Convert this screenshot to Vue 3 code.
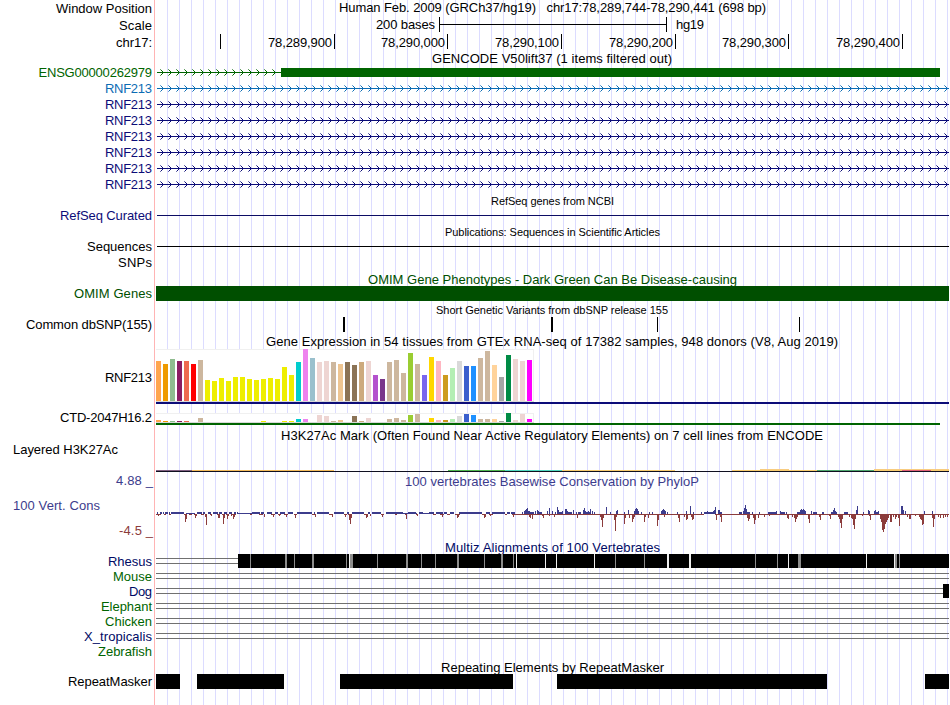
<script setup>
const range = (n) => Array.from({ length: n }, (_, i) => i)
const GREEN = '#006400', NAVY = '#0c0c78', SKY = '#0c6cb4', CONS = '#3c3c8c', RUST = '#8c3c3c', OMIM = '#004f00', ALIGN = '#000a64'

// text entries: [text, left, right, baseline]
const source = [
  { h: 17, label: ['Window Position', 56, 152, 13], texts: [['Human Feb. 2009 (GRCh37/hg19)\u00a0\u00a0\u00a0chr17:78,289,744-78,290,441 (698 bp)', 339, 766, 12]] },
  { h: 17, label: ['Scale', 119, 152, 30], texts: [['200 bases', 376, 435, 29], ['hg19', 676, 704, 29]],
    rects: [[439, 24, 228, 1, '#000'], [439, 17, 1, 15, '#000'], [666, 17, 1, 15, '#000']] },
  { h: 17, label: ['chr17:', 116, 152, 47],
    texts: ['78,289,900', '78,290,000', '78,290,100', '78,290,200', '78,290,300', '78,290,400'].map((t, i) => [t, [268, 381, 495, 609, 722, 836][i], [332, 445, 559, 673, 786, 900][i], 47]),
    rects: [220, 334, 447, 561, 675, 788, 902].map((x) => [x, 34, 1, 15, '#000']) },
  { h: 13, texts: [['GENCODE V50lift37 (1 items filtered out)', 432, 672, 63]] },
  { h: 16, label: ['ENSG00000262979', 38.5, 152, 77], color: GREEN, arrows: 15, rects: [[157, 72, 124, 1, GREEN], [281, 68, 659, 9, GREEN]] },
  ...range(7).map((i) => ({ h: 16, label: ['RNF213', 105, 152, 93 + i * 16], color: i ? NAVY : SKY, arrows: 99, rects: [[157, 88 + i * 16, 792, 1, i ? NAVY : SKY]] })),
  { h: 16, small: true, texts: [['RefSeq genes from NCBI', 491, 614, 205]] },
  { h: 15, label: ['RefSeq Curated', 60, 152, 220], color: NAVY, rects: [[157, 215, 792, 1, '#0c0c64']] },
  { h: 16, small: true, texts: [['Publications: Sequences in Scientific Articles', 445, 660, 236]] },
  { h: 15, label: ['Sequences', 87, 152, 251], rects: [[157, 246, 792, 1, '#000']] },
  { h: 16, label: ['SNPs', 118, 152, 267] },
  { h: 16, titleColor: OMIM, texts: [['OMIM Gene Phenotypes - Dark Green Can Be Disease-causing', 368, 737, 284]] },
  { h: 15, label: ['OMIM Genes', 74, 152, 298], color: OMIM, rects: [[156, 286, 793, 15, OMIM]] },
  { h: 16, small: true, texts: [['Short Genetic Variants from dbSNP release 155', 436, 668, 314]] },
  { h: 15, label: ['Common dbSNP(155)', 26, 152, 329], rects: [[343, 317, 2, 15, '#000'], [551, 317, 2, 15, '#000'], [657, 317, 1, 15, '#000'], [799, 317, 1, 15, '#000']] },
  { h: 17, texts: [['Gene Expression in 54 tissues from GTEx RNA-seq of 17382 samples, 948 donors (V8, Aug 2019)', 266, 838, 346]] },
  { h: 60, kind: 'gtexMain', label: ['RNF213', 105, 152, 382] },
  { h: 19, kind: 'gtexSmall', label: ['CTD-2047H16.2', 60, 152, 422] },
  { h: 14, texts: [['H3K27Ac Mark (Often Found Near Active Regulatory Elements) on 7 cell lines from ENCODE', 281, 823, 440]] },
  { h: 31, kind: 'h3k', label: ['Layered H3K27Ac', 13, 118, 454] },
  { h: 16, label: ['4.88 _', 116, 153, 485], color: CONS, titleColor: CONS, texts: [['100 vertebrates Basewise Conservation by PhyloP', 405, 699, 486]] },
  { h: 35, kind: 'phylop', label: ['100 Vert. Cons', 13, 100, 510], color: CONS },
  { h: 17, label: ['-4.5 _', 119, 153, 535], color: RUST },
  { h: 14, titleColor: ALIGN, texts: [['Multiz Alignments of 100 Vertebrates', 445, 660, 552]] },
  ...[['Rhesus', 108], ['Mouse', 113], ['Dog', 129], ['Elephant', 101], ['Chicken', 105], ['X_tropicalis', 84], ['Zebrafish', 98]].map(([t, l], i) => ({
    h: 15, label: [t, l, 152, 566 + i * 15], color: [0, 2, 5].includes(i) ? ALIGN : '#006400', kind: i === 0 ? 'rhesus' : '',
    rects: i === 6 ? [] : [[156, 558 + i * 15, 793, 1, '#707070'], [156, 563 + i * 15, 793, 1, '#707070'], ...(i === 2 ? [[943, 584, 6, 14, '#000']] : [])]
  })),
  { h: 15, texts: [['Repeating Elements by RepeatMasker', 441, 664, 672]] },
  { h: 31, label: ['RepeatMasker', 68, 152, 686], rects: [[156, 180], [197, 284], [340, 513], [557, 827], [925, 949]].map(([a, b]) => [a, 674, b - a, 15, '#000']) }
]

const T = '#cdb79e', Y = '#eeee00', P = '#eed5d2'
const tissue = ['#ffa54f', '#ee9a00', '#8fbc8f', '#8b1c62', '#ee6a50', '#ff0000', T, ...Array(13).fill(Y), '#00cdcd', '#ee82ee', '#9ac0cd', P, P, T, '#eec591', '#8b7355', '#8b7355', '#cdaa7d', P, '#b452cd', '#7a378b', T, T, T, '#9acd32', T, '#7a67ee', '#ffd700', '#ffb6c1', '#cd9b1d', '#b4eeb4', '#d9d9d9', '#3a5fcd', '#1e90ff', T, T, '#ffd39b', '#a6a6a6', '#008b45', P, P, '#ff00ff']
const mainH = [40, 37, 42, 40, 40, 37, 41, 21, 20, 23, 20, 24, 24, 22, 21, 22, 23, 22, 34, 26, 39, 52, 43, 39, 40, 39, 37, 39, 36, 39, 40, 26, 22, 39, 41, 28, 48, 37, 26, 44, 40, 26, 33, 40, 35, 35, 43, 50, 36, 24, 46, 42, 40, 41]
const smallH = [2, 1, 1, 1, 1, 0, 4, 0, 0, 0, 0, 0, 0, 0, 0, 1, 0, 0, 1, 1, 3, 3, 0, 7, 6, 1, 2, 0, 6, 1, 4, 0, 0, 3, 4, 2, 7, 8, 0, 4, 2, 2, 3, 6, 8, 7, 3, 3, 3, 1, 9, 2, 8, 3]
const bars = (hs, base) => hs.map((h, i) => [156 + i * 7, base - h, 5, h, tissue[i]])

// conservation wiggle: runs of low score, plus individual peaks as [x, height]
const blueRuns = [[157, 1], [160, 2], [163, 1], [165, 3], [169, 1], [171, 13], [197, 5], [203, 2], [208, 3], [213, 5], [219, 3], [224, 3], [229, 3], [234, 2], [237, 1], [252, 8], [261, 3], [267, 5], [275, 3], [280, 5], [288, 5], [297, 15], [314, 1], [317, 12], [334, 10], [347, 2], [352, 12], [368, 2], [372, 8], [378, 3], [386, 17], [408, 8], [419, 4], [429, 5], [436, 7], [444, 3], [450, 4], [459, 23], [486, 4], [492, 13], [507, 3], [511, 4]]
const thinBlue = [[186, 9], [238, 15], [403, 14], [422, 7]]
const up = [[522, 2], [524, 3], [525, 4], [526, 5], [527, 6], [528, 3], [529, 3], [535, 3], [537, 4], [538, 3], [547, 3], [549, 6], [552, 3], [555, 2], [557, 7], [558, 4], [562, 3], [565, 5], [566, 5], [567, 3], [571, 2], [573, 4], [576, 2], [583, 4], [584, 6], [585, 3], [588, 3], [590, 5], [592, 3], [606, 7], [610, 2], [616, 3], [617, 4], [624, 2], [628, 4], [634, 3], [635, 5], [636, 6], [637, 5], [638, 3], [641, 2], [649, 2], [652, 2], [661, 3], [662, 4], [663, 5], [664, 4], [665, 3], [667, 2], [677, 2], [686, 3], [690, 8], [693, 2], [701, 2], [707, 3], [713, 3], [714, 4], [715, 7], [718, 4], [719, 4], [739, 2], [743, 3], [744, 6], [745, 9], [746, 5], [752, 2], [759, 2], [776, 3], [780, 3], [784, 2], [786, 2], [800, 4], [801, 5], [802, 4], [803, 5], [804, 4], [805, 3], [811, 3], [814, 2], [816, 2], [823, 2], [833, 4], [834, 6], [835, 3], [845, 2], [846, 2], [856, 4], [857, 8], [863, 2], [868, 4], [869, 3], [874, 3], [875, 4], [878, 3], [901, 8], [902, 8], [903, 4], [905, 3], [924, 3], [932, 3]]
const upRuns = [[530, 4], [539, 3], [559, 3], [568, 4], [578, 3], [586, 5], [594, 1], [704, 10], [720, 2], [739, 3], [747, 3], [768, 9], [781, 4], [797, 9], [813, 4], [822, 2], [831, 6], [844, 4], [876, 2]]
const down = [[158, 2], [185, 8], [186, 5], [190, 1], [195, 4], [196, 2], [205, 3], [206, 11], [211, 2], [218, 4], [219, 4], [223, 10], [224, 4], [227, 5], [228, 2], [231, 2], [233, 5], [234, 3], [264, 3], [273, 3], [279, 2], [286, 3], [295, 4], [315, 3], [332, 3], [345, 3], [349, 6], [350, 10], [351, 4], [366, 4], [367, 3], [370, 2], [382, 3], [406, 5], [417, 2], [442, 3], [457, 4], [458, 3], [484, 4], [485, 3], [490, 2], [513, 3], [529, 3], [530, 4], [532, 5], [542, 2], [543, 4], [549, 2], [554, 3], [577, 4], [600, 3], [601, 6], [602, 13], [603, 4], [614, 6], [615, 17], [616, 3], [624, 10], [625, 4], [629, 4], [632, 8], [633, 5], [634, 3], [644, 8], [645, 3], [648, 4], [657, 12], [658, 6], [664, 3], [678, 4], [679, 8], [684, 3], [686, 6], [687, 5], [691, 3], [692, 6], [693, 5], [716, 6], [720, 3], [721, 8], [747, 4], [748, 7], [749, 5], [753, 4], [754, 10], [755, 6], [758, 4], [764, 3], [769, 2], [787, 4], [788, 5], [792, 3], [794, 4], [795, 8], [796, 5], [797, 3], [808, 5], [809, 9], [819, 3], [820, 6], [829, 2], [830, 5], [838, 3], [839, 5], [840, 9], [841, 14], [842, 5], [849, 3], [851, 4], [852, 5], [853, 11], [854, 15], [855, 5], [862, 2], [869, 2], [870, 6], [880, 5], [881, 8], [882, 16], [883, 18], [884, 15], [885, 10], [886, 8], [887, 6], [888, 4], [890, 8], [891, 8], [893, 3], [895, 5], [896, 3], [898, 4], [899, 12], [907, 3], [909, 5], [910, 5], [915, 2], [919, 3], [920, 5], [921, 6], [922, 11], [923, 10], [932, 4], [933, 13], [934, 5], [938, 3], [940, 4], [943, 4], [945, 3], [947, 3]]
const redBase = [[156, 5], [164, 2], [169, 2], [184, 3], [189, 3], [194, 3], [201, 3], [210, 2], [217, 3], [222, 2], [226, 3], [232, 4], [250, 2], [259, 4], [271, 4], [278, 3], [284, 4], [294, 3], [312, 4], [329, 4], [344, 3], [348, 4], [364, 4], [381, 3], [395, 2], [405, 2], [416, 2], [433, 3], [440, 4], [447, 3], [455, 5], [482, 4], [489, 4], [505, 2], [512, 4], [516, 188], [715, 35], [750, 199]]

const special = {
  gtexMain: [[156, 349, 378, 53, '#f0f0f0'], [156, 350, 377, 51, '#fff'], [156, 401, 378, 1, '#d8d8d8'], ...bars(mainH, 401), [156, 402, 793, 2, NAVY]],
  gtexSmall: [[156, 413, 378, 10, '#f0f0f0'], [156, 414, 377, 8, '#fff'], [156, 422, 378, 1, '#d8d8d8'], ...bars(smallH, 422), [156, 423, 784, 2, GREEN]],
  h3k: [[156, 471, 793, 1, '#101020'], [156, 470, 36, 1, '#806080'], [192, 470, 142, 1, '#f4bc5c'], [448, 470, 57, 1, '#50b850'], [505, 470, 57, 1, '#50d8c0'], [562, 470, 113, 1, '#f8cc70'], [732, 470, 85, 1, '#f8cc70'], [760, 469, 29, 1, '#f8cc80'], [817, 470, 57, 1, '#50a870'], [874, 469, 75, 1, '#f8cc80'], [874, 470, 28, 1, '#f8cc70'], [902, 470, 29, 1, '#e06078'], [931, 470, 18, 1, '#f8cc70']],
  phylop: [
    ...thinBlue.map(([x, w]) => [x, 513, w, 1, CONS]), ...blueRuns.map(([x, w]) => [x, 512, w, 2, CONS]), ...upRuns.map(([x, w]) => [x, 512, w, 2, CONS]),
    ...up.map(([x, h]) => [x, 514 - h, 1, h, CONS]), ...redBase.map(([x, w]) => [x, 514, w, 1, RUST]), ...down.map(([x, h]) => [x, 514, 1, h, RUST])
  ],
  rhesus: [[238, 554, 711, 14, '#000'],
    ...[[250, 1], [285, 2], [294, 1], [312, 2], [346, 1], [350, 3], [377, 1], [406, 2], [421, 1], [435, 1], [457, 2], [484, 1], [501, 2], [513, 1], [615, 1], [644, 1], [755, 1], [777, 1], [798, 3], [895, 2], [899, 1]].map(([x, w]) => [x, 554, w, 14, '#8c8c8c']),
    ...[[349, 1], [516, 1], [545, 1], [556, 1], [594, 1], [667, 2], [689, 2], [788, 1], [866, 1], [894, 1]].map(([x, w]) => [x, 554, w, 14, '#f0f0f0'])]
}

let top = 0
const rows = source.map((r) => {
  const row = { color: '#000', titleColor: '#000', texts: [], arrows: 0, ...r, y: top }
  row.shapes = [...(r.rects || []), ...(special[r.kind] || [])]
  top += r.h
  return row
})
const dot = (x, y) => `M${x} ${y}h1v1h-1z`
const chevrons = (row) => range(row.arrows).map((i) => {
  const x = 162 + i * 8, y = row.shapes[0][1]
  return dot(x, y - 1) + dot(x - 1, y - 2) + dot(x, y + 1) + dot(x - 1, y + 2)
}).join('')
const chevronEnds = (row) => range(row.arrows).map((i) => {
  const x = 160 + i * 8, y = row.shapes[0][1]
  return dot(x, y - 3) + dot(x, y + 3)
}).join('')
</script>

<template>
  <main class="browser">
    <section v-for="(row, i) in rows" :key="i" class="row" :class="{ small: row.small }">
      <svg class="side" width="154" :height="row.h" :viewBox="`0 ${row.y} 154 ${row.h}`">
        <text v-if="row.label" :x="row.label[1]" :y="row.label[3]" :textLength="row.label[2] - row.label[1]" :fill="row.color">{{ row.label[0] }}</text>
      </svg>
      <svg class="track" width="795" :height="row.h" :viewBox="`154 ${row.y} 795 ${row.h}`">
        <rect v-for="(s, k) in row.shapes" :key="k" :x="s[0]" :y="s[1]" :width="s[2]" :height="s[3]" :fill="s[4]" />
        <template v-if="row.arrows">
          <path :d="chevrons(row)" :fill="row.color" />
          <path :d="chevronEnds(row)" :fill="row.color" opacity=".6" />
        </template>
        <text v-for="t in row.texts" :key="t[0]" :x="t[1]" :y="t[3]" :textLength="t[2] - t[1]" :fill="row.titleColor">{{ t[0] }}</text>
      </svg>
    </section>
  </main>
</template>

<style>
body { margin: 0; background: #fff; }
</style>

<style scoped>
.browser {
  display: flex;
  flex-direction: column;
  width: 950px;
  height: 705px;
  overflow: hidden;
  font-family: "Liberation Sans", Arial, sans-serif;
  font-size: 13px;
  background:
    linear-gradient(#ffb4b4, #ffb4b4) 154px 0 / 1px 100% no-repeat,
    repeating-linear-gradient(90deg, #dcdcff 0 1px, transparent 1px 12px) 167px 0 / 782px 100% no-repeat,
    #fff;
}
.row { display: flex; flex: none; }
.row svg { display: block; flex: none; overflow: visible; }
.row rect, .row path { shape-rendering: crispEdges; }
.small { font-size: 11px; }
</style>
